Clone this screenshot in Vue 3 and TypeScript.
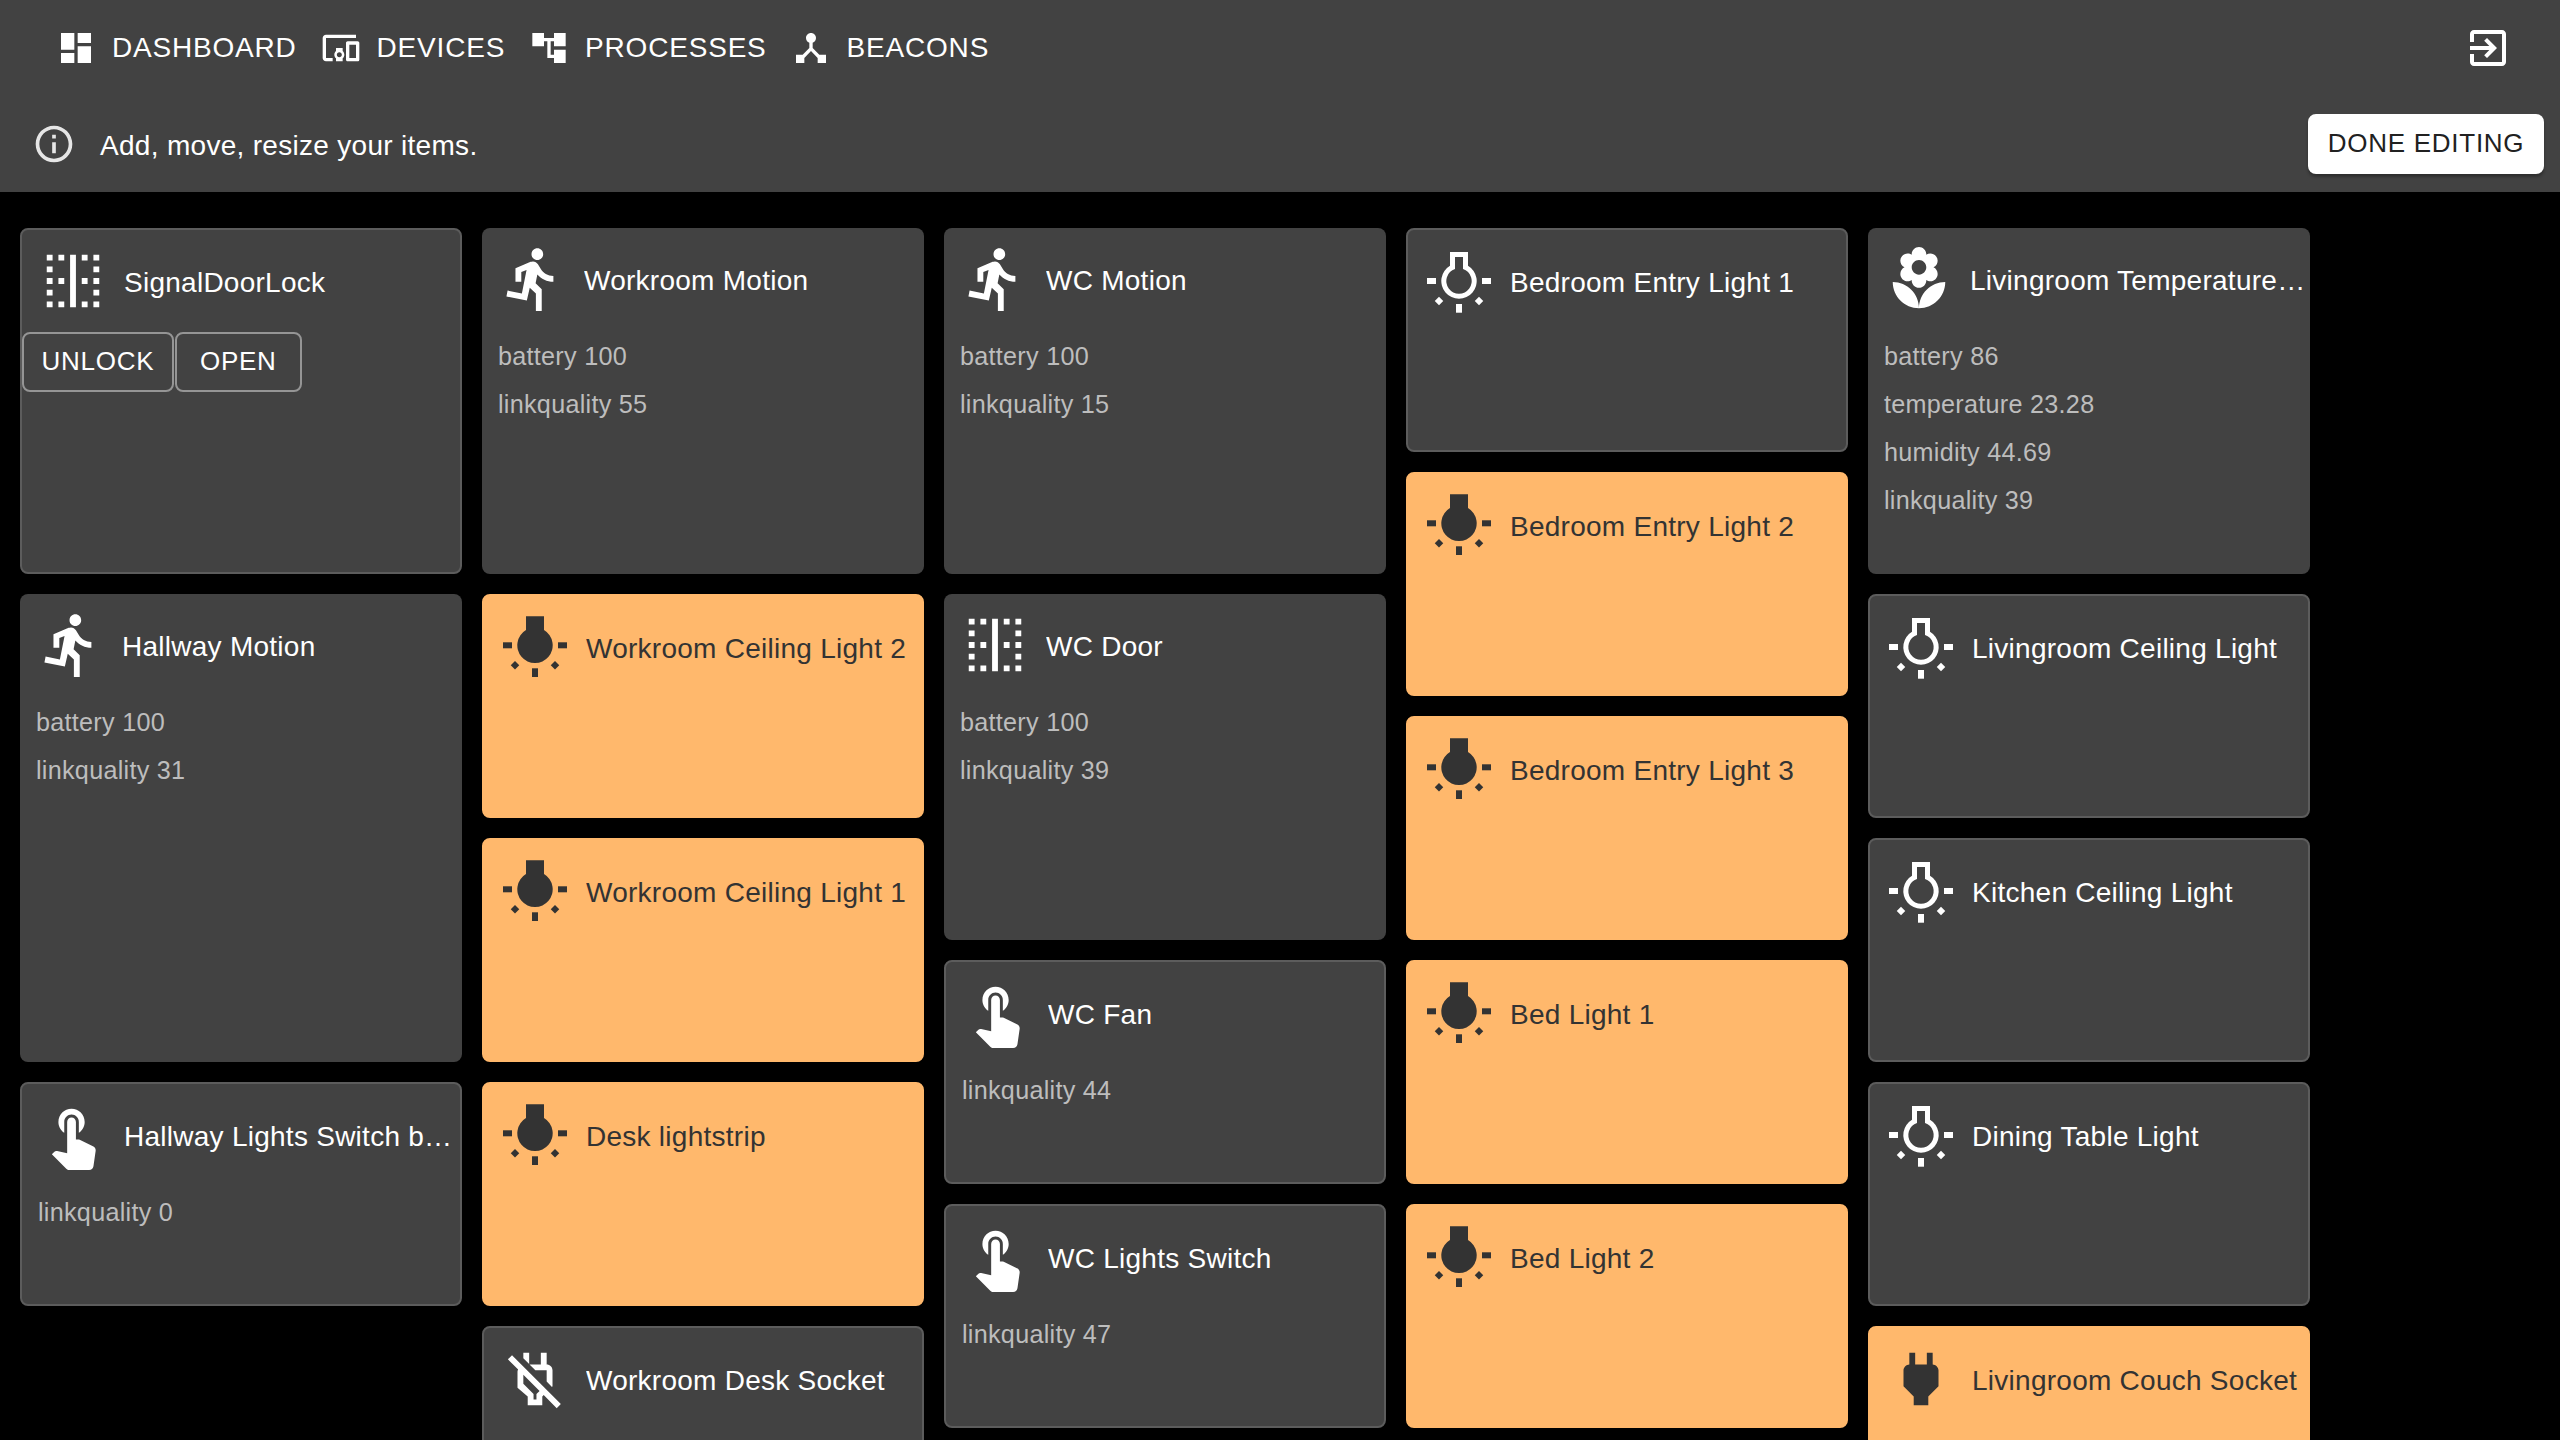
<template>
  <div class="page">
    <header class="topbar">
      <nav class="toolbar">
        <a v-for="item in navItems" :key="item.label" class="nav-btn">
          <svg class="nav-icon" viewBox="0 0 24 24"><path :d="item.icon" /></svg>
          <span>{{ item.label }}</span>
        </a>
        <svg class="logout" viewBox="0 0 24 24"><path :d="icons.logout" /></svg>
      </nav>
      <div class="banner">
        <svg class="info-icon" viewBox="0 0 24 24"><path :d="icons.info" /></svg>
        <span class="banner-text">Add, move, resize your items.</span>
        <button class="done-btn">DONE EDITING</button>
      </div>
    </header>

    <main class="board">
      <div v-for="(col, i) in columns" :key="i" class="column">
        <section
          v-for="card in col"
          :key="card.title"
          class="card"
          :class="[`span-${card.span}`, { active: card.active, flat: card.flat }]"
        >
          <div class="card-head">
            <svg v-if="card.icon === 'bulb'" class="card-icon" viewBox="0 0 70 70">
              <g :transform="card.active ? 'translate(0 -1.7)' : undefined">
                <path v-if="card.active" d="M26 6h18v13.8a17.7 17.7 0 1 1-18 0z" />
                <path v-else fill-rule="evenodd" d="M26 6h18v13.8a17.7 17.7 0 1 1-18 0zM31 11v12a12.7 12.7 0 1 0 8 0V11z" />
                <rect x="3" y="32" width="9" height="6" />
                <rect x="58" y="32" width="9" height="6" />
                <rect x="32" y="58" width="6" height="8.7" />
                <rect x="12" y="52" width="6" height="6" transform="rotate(45 15 55)" />
                <rect x="52" y="52" width="6" height="6" transform="rotate(45 55 55)" />
              </g>
            </svg>
            <svg v-else class="card-icon" viewBox="0 0 24 24"><path :d="icons[card.icon]" /></svg>
            <span class="card-title">{{ card.title }}</span>
          </div>
          <div v-if="card.actions" class="card-actions">
            <button v-for="a in card.actions" :key="a" class="outline-btn">{{ a }}</button>
          </div>
          <div v-if="card.values" class="card-values">
            <div v-for="v in card.values" :key="v" class="value">{{ v }}</div>
          </div>
        </section>
      </div>
    </main>
  </div>
</template>

<script setup lang="ts">
interface Card {
  title: string
  span: number
  icon: string
  active?: boolean
  flat?: boolean
  values?: string[]
  actions?: string[]
}

const icons: Record<string, string> = {
  dashboard: 'M3 13h8V3H3v10zm0 8h8v-6H3v6zm10 0h8V11h-8v10zm0-18v6h8V3h-8z',
  devices: 'M3 6h18V4H3c-1.1 0-2 .9-2 2v12c0 1.1.9 2 2 2h4v-2H3V6zm10 6H9v1.78c-.61.55-1 1.33-1 2.22s.39 1.67 1 2.22V20h4v-1.78c.61-.55 1-1.34 1-2.22s-.39-1.67-1-2.22V12zm-2 5.5c-.83 0-1.5-.67-1.5-1.5s.67-1.5 1.5-1.5 1.5.67 1.5 1.5-.67 1.5-1.5 1.5zM22 8h-6c-.5 0-1 .5-1 1v10c0 .5.5 1 1 1h6c.5 0 1-.5 1-1V9c0-.5-.5-1-1-1zm-1 10h-4v-8h4v8z',
  tree: 'M22 11V3h-7v3H9V3H2v8h7V8h2v10h4v3h7v-8h-7v3h-2V8h2v3z',
  hub: 'M17 16l-4-4V8.82C14.16 8.4 15 7.3 15 6c0-1.66-1.34-3-3-3S9 4.34 9 6c0 1.3.84 2.4 2 2.82V12l-4 4H3v5h5v-3.05l4-4.2 4 4.2V21h5v-5h-4z',
  logout: 'M10.09 15.59L11.5 17l5-5-5-5-1.41 1.41L12.67 11H3v2h9.67l-2.58 2.59zM19 3H5c-1.11 0-2 .9-2 2v4h2V5h14v14H5v-4H3v4c0 1.1.89 2 2 2h14c1.1 0 2-.9 2-2V5c0-1.1-.9-2-2-2z',
  info: 'M11 7h2v2h-2zm0 4h2v6h-2zm1-9C6.48 2 2 6.48 2 12s4.48 10 10 10 10-4.48 10-10S17.52 2 12 2zm0 18c-4.41 0-8-3.59-8-8s3.59-8 8-8 8 3.59 8 8-3.59 8-8 8z',
  door: 'M3 9h2V7H3v2zm0-4h2V3H3v2zm4 16h2v-2H7v2zm0-8h2v-2H7v2zm-4 0h2v-2H3v2zm0 8h2v-2H3v2zm0-4h2v-2H3v2zM7 5h2V3H7v2zm12 12h2v-2h-2v2zm-8 4h2V3h-2v18zm8 0h2v-2h-2v2zm0-8h2v-2h-2v2zm0-10v2h2V3h-2zm0 6h2V7h-2v2zm-4-4h2V3h-2v2zm0 16h2v-2h-2v2zm0-8h2v-2h-2v2z',
  run: 'M13.49 5.48c1.1 0 2-.9 2-2s-.9-2-2-2-2 .9-2 2 .9 2 2 2zm-3.6 13.9l1-4.4 2.1 2v6h2v-7.5l-2.1-2 .6-3c1.3 1.5 3.3 2.5 5.5 2.5v-2c-1.9 0-3.5-1-4.3-2.4l-1-1.6c-.4-.6-1-1-1.7-1-.3 0-.5.1-.8.1l-5.2 2.2v4.7h2v-3.4l1.8-.7-1.6 8.1-4.9-1-.4 2 7 1.4z',
  flower: 'M12 22c4.97 0 9-4.03 9-9-4.97 0-9 4.03-9 9zM5.6 10.25c0 1.38 1.12 2.5 2.5 2.5.53 0 1.01-.16 1.42-.44l-.02.19c0 1.38 1.12 2.5 2.5 2.5s2.5-1.12 2.5-2.5l-.02-.19c.4.28.89.44 1.42.44 1.38 0 2.5-1.12 2.5-2.5 0-1-.59-1.85-1.43-2.25.84-.4 1.43-1.25 1.43-2.25 0-1.38-1.12-2.5-2.5-2.5-.53 0-1.01.16-1.42.44l.02-.19C14.5 2.12 13.38 1 12 1S9.5 2.12 9.5 3.5l.02.19c-.4-.28-.89-.44-1.42-.44-1.38 0-2.5 1.12-2.5 2.5 0 1 .59 1.85 1.43 2.25-.84.4-1.43 1.25-1.43 2.25zM12 5.5c1.38 0 2.5 1.12 2.5 2.5s-1.12 2.5-2.5 2.5S9.5 9.38 9.5 8s1.12-2.5 2.5-2.5zM3 13c0 4.97 4.03 9 9 9 0-4.97-4.03-9-9-9z',
  touch: 'M9 11.24V7.5C9 6.12 10.12 5 11.5 5S14 6.12 14 7.5v3.74c1.21-.81 2-2.18 2-3.74C16 5.01 13.99 3 11.5 3S7 5.01 7 7.5c0 1.56.79 2.93 2 3.74zm9.84 4.63l-4.54-2.26c-.17-.07-.35-.11-.54-.11H13v-6c0-.83-.67-1.5-1.5-1.5S10 6.67 10 7.5v10.74l-3.43-.72c-.08-.01-.15-.03-.24-.03-.31 0-.59.13-.79.33l-.79.8 4.94 4.94c.27.27.65.44 1.06.44h6.79c.75 0 1.36-.55 1.47-1.28l.75-5.27c.01-.07.02-.14.02-.2 0-.62-.38-1.16-.91-1.38z',
  plug: 'M16.01 7L16 3h-2v4h-4V3H8v4h-.01C7 6.99 6 7.99 6 8.99v5.49L9.5 18v3h5v-3l3.5-3.51v-5.5c0-1-1-2-1.99-1.99z',
  plugoff: 'M10 3H8v1.88l2 2V3zm6 6v3.88l1.82 1.82.18-.2V9c0-1.1-.9-2-2-2V3h-2v4h-3.88l2 2H16zM4.12 3.84 2.71 5.25 6.22 8.76c-.13.2-.22.43-.22.7v5.52L9.5 18v3h5v-3l.48-.48 4.47 4.47 1.41-1.41L4.12 3.84zM12.5 17.17V19h-1v-1.83L8 13.65V10.54l5.57 5.57-1.07 1.06z',
}

const navItems = [
  { label: 'DASHBOARD', icon: icons.dashboard },
  { label: 'DEVICES', icon: icons.devices },
  { label: 'PROCESSES', icon: icons.tree },
  { label: 'BEACONS', icon: icons.hub },
]

const light = (title: string, active = false): Card => ({ title, span: 2, icon: 'bulb', active })

const columns: Card[][] = [
  [
    { title: 'SignalDoorLock', span: 3, icon: 'door', actions: ['UNLOCK', 'OPEN'] },
    { title: 'Hallway Motion', span: 4, icon: 'run', flat: true, values: ['battery 100', 'linkquality 31'] },
    { title: 'Hallway Lights Switch button', span: 2, icon: 'touch', values: ['linkquality 0'] },
  ],
  [
    { title: 'Workroom Motion', span: 3, icon: 'run', flat: true, values: ['battery 100', 'linkquality 55'] },
    light('Workroom Ceiling Light 2', true),
    light('Workroom Ceiling Light 1', true),
    light('Desk lightstrip', true),
    { title: 'Workroom Desk Socket', span: 2, icon: 'plugoff' },
  ],
  [
    { title: 'WC Motion', span: 3, icon: 'run', flat: true, values: ['battery 100', 'linkquality 15'] },
    { title: 'WC Door', span: 3, icon: 'door', flat: true, values: ['battery 100', 'linkquality 39'] },
    { title: 'WC Fan', span: 2, icon: 'touch', values: ['linkquality 44'] },
    { title: 'WC Lights Switch', span: 2, icon: 'touch', values: ['linkquality 47'] },
  ],
  [
    light('Bedroom Entry Light 1'),
    light('Bedroom Entry Light 2', true),
    light('Bedroom Entry Light 3', true),
    light('Bed Light 1', true),
    light('Bed Light 2', true),
  ],
  [
    {
      title: 'Livingroom Temperature Sensor',
      span: 3,
      icon: 'flower',
      flat: true,
      values: ['battery 86', 'temperature 23.28', 'humidity 44.69', 'linkquality 39'],
    },
    light('Livingroom Ceiling Light'),
    light('Kitchen Ceiling Light'),
    light('Dining Table Light'),
    { title: 'Livingroom Couch Socket', span: 2, icon: 'plug', active: true },
  ],
]
</script>

<style>
html,
body {
  margin: 0;
  height: 100%;
  overflow: hidden;
  background: #000;
}
</style>

<style scoped>
.page {
  font-family: "Liberation Sans", Arial, sans-serif;
  color: #fff;
  background: #000;
  height: 1440px;
  overflow: hidden;
}

.topbar {
  background: #424242;
}

.toolbar {
  display: flex;
  align-items: center;
  height: 96px;
  padding: 0 48px 0 56px;
  gap: 24px;
}

.nav-btn {
  display: flex;
  align-items: center;
  gap: 16px;
  font-size: 28px;
  letter-spacing: 0.8px;
}

.nav-icon {
  width: 40px;
  height: 40px;
  fill: #fff;
}

.logout {
  width: 48px;
  height: 48px;
  fill: #fff;
  margin-left: auto;
}

.banner {
  display: flex;
  align-items: center;
  height: 96px;
  padding: 0 16px 0 32px;
}

.info-icon {
  width: 44px;
  height: 44px;
  fill: #e6e6e6;
  margin-right: 24px;
}

.banner-text {
  font-size: 28px;
  letter-spacing: 0.3px;
  padding-top: 3px;
}

.done-btn {
  margin-left: auto;
  height: 60px;
  width: 236px;
  border: 0;
  border-radius: 8px;
  background: #fff;
  color: #212121;
  font: inherit;
  font-size: 26px;
  letter-spacing: 0.74px;
  box-shadow: 0 3px 3px rgba(0, 0, 0, 0.3);
  padding: 0 0 2px;
}

.board {
  display: flex;
  gap: 20px;
  padding: 36px 20px 0;
  align-items: flex-start;
}

.column {
  width: 442px;
  display: flex;
  flex-direction: column;
  gap: 20px;
  flex: none;
}

.card {
  box-sizing: border-box;
  background: #424242;
  border: 2px solid #5c5c5c;
  border-radius: 8px;
  flex: none;
}

.card.flat {
  border: 0;
}

.card.active {
  background: #ffb86c;
  border-color: #ffb86c;
  color: #333;
}

.span-2 {
  height: 224px;
}

.span-3 {
  height: 346px;
}

.span-4 {
  height: 468px;
}

.card-head {
  display: flex;
  align-items: center;
  gap: 16px;
  padding: 16px 0 0 16px;
}

.card-icon {
  width: 70px;
  height: 70px;
  flex: none;
  fill: #fff;
}

.active .card-icon {
  fill: #333;
}

.card-title {
  flex: 1;
  min-width: 0;
  font-size: 28px;
  letter-spacing: 0.26px;
  padding-top: 3px;
  white-space: nowrap;
  overflow: hidden;
  text-overflow: ellipsis;
}

.card-actions {
  display: flex;
  gap: 1px;
  margin-top: 16px;
}

.outline-btn {
  height: 60px;
  box-sizing: border-box;
  min-width: 127px;
  padding: 0 17.5px 1px;
  background: transparent;
  border: 2px solid #959595;
  border-radius: 8px;
  color: #fff;
  font: inherit;
  font-size: 26px;
  letter-spacing: 0.74px;
}

.card-values {
  padding: 18px 16px 0;
}

.value {
  font-size: 25.2px;
  line-height: 48px;
  letter-spacing: 0.27px;
  color: #bdbdbd;
}
</style>
